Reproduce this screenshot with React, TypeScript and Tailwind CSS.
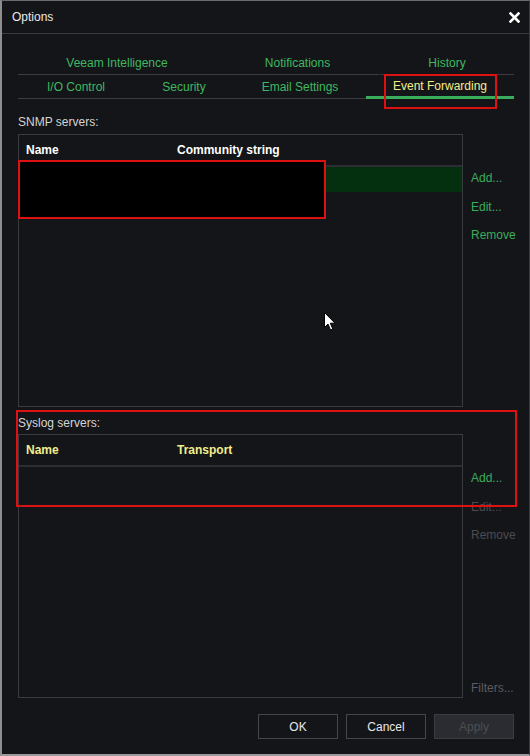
import React from "react";

const font = { fontFamily: '"Liberation Sans", Arial, sans-serif' };

function Tab({ label, w, active, gapLeft }: { label: string; w: number; active?: boolean; gapLeft?: boolean }) {
  return (
    <div
      className={
        "flex items-center justify-center h-[24px] shrink-0 " +
        (active ? "border-b-[3px] border-[#3aad5c] text-[#f2ee8c]" : "border-b border-[#3c3d42] text-[#3fb860]") +
        (gapLeft ? " ml-[1px]" : "")
      }
      style={{ width: w }}
    >
      {label}
    </div>
  );
}

function SideLinks({ enabled, filters }: { enabled: boolean; filters?: boolean }) {
  return (
    <div className="flex flex-col pl-[8px] pt-[37px] leading-[15px] flex-1 min-w-0 whitespace-nowrap">
      <div className="text-[#3aad5c]">Add...</div>
      <div className={"mt-[14px] " + (enabled ? "text-[#3aad5c]" : "text-[#4a4c51]")}>Edit...</div>
      <div className={"mt-[13px] " + (enabled ? "text-[#3aad5c]" : "text-[#4a4c51]")}>Remove</div>
      {filters && <div className="mt-auto mb-[2px] text-[#5a5c61]">Filters...</div>}
    </div>
  );
}

export default function App() {
  return (
    <div
      className="relative w-[530px] h-[756px] bg-[#141519] border-l-2 border-l-[#8e8e8e] border-t border-t-[#6a6a6a] border-b-2 border-b-[#9a9a9a] border-r border-r-[#3a3b3f] flex flex-col text-[12px] overflow-hidden"
      style={font}
    >
      {/* title bar */}
      <div className="h-[33px] border-b border-[#3a3b40] flex items-center justify-between pl-[10px] pr-[9px] shrink-0">
        <span className="text-[#e8e8e8] text-[12px] leading-[15px]">Options</span>
        <svg width="11" height="11" viewBox="0 0 11 11">
          <path d="M1.5 1.5 L9.5 9.5 M9.5 1.5 L1.5 9.5" stroke="#ffffff" strokeWidth="2.6" strokeLinecap="square" />
        </svg>
      </div>

      <div className="flex flex-col pl-[16px] pr-[15px]">
        {/* tabs */}
        <div className="mt-[17px] flex">
          <Tab label="Veeam Intelligence" w={198} />
          <Tab label="Notifications" w={163} />
          <Tab label="History" w={134} gapLeft />
        </div>
        <div className="flex">
          <Tab label="I/O Control" w={116} />
          <Tab label="Security" w={100} />
          <Tab label="Email Settings" w={132} />
          <Tab label="Event Forwarding" w={148} active />
        </div>

        {/* SNMP */}
        <div className="mt-[16px] leading-[15px] text-[#d4d4d4]">SNMP servers:</div>
        <div className="mt-[4px] flex">
          <div className="relative shrink-0 w-[445px] h-[273px] border border-[#3a3b40]">
            <div className="h-[32px] border-b-2 border-[#2c2d32] flex items-center pl-[7px] font-bold text-white">
              <div className="w-[151px]">Name</div>
              <div>Community string</div>
            </div>
            <div className="h-[25px] bg-[#05300f]" />
            <div className="absolute left-[-1px] top-[25px] w-[308px] h-[59px] bg-black border-2 border-[#dd1111]" />
          </div>
          <SideLinks enabled />
        </div>

        {/* Syslog */}
        <div className="mt-[9px] leading-[15px] text-[#d4d4d4]">Syslog servers:</div>
        <div className="mt-[3px] flex">
          <div className="relative shrink-0 w-[445px] h-[264px] border border-[#3a3b40]">
            <div className="h-[32px] border-b-2 border-[#2c2d32] flex items-center pl-[7px] font-bold text-[#f2ee8c]">
              <div className="w-[151px]">Name</div>
              <div>Transport</div>
            </div>
          </div>
          <SideLinks enabled={false} filters />
        </div>

        {/* buttons */}
        <div className="mt-[16px] flex justify-end gap-[8px]">
          <div className="w-[80px] h-[25px] border border-[#45464b] flex items-center justify-center text-[#e8e8e8]">OK</div>
          <div className="w-[80px] h-[25px] border border-[#45464b] flex items-center justify-center text-[#e8e8e8]">Cancel</div>
          <div className="w-[80px] h-[25px] border border-[#3a3c41] bg-[#2a2c31] flex items-center justify-center text-[#4c4e53]">Apply</div>
        </div>
      </div>

      {/* overlays: red annotation boxes */}
      <div className="absolute left-[382px] top-[73px] w-[113px] h-[35px] border-2 border-[#dd1111]" />
      <div className="absolute left-[14px] top-[409px] w-[501px] h-[97px] border-2 border-[#dd1111]" />

      {/* mouse cursor */}
      <svg className="absolute left-[322px] top-[311px]" width="13" height="20" viewBox="0 0 13 20">
        <path d="M0.5 0.5 L0.5 15.5 L4 12 L6.5 18 L8.8 17 L6.3 11.2 L11 11.2 Z" fill="#ffffff" stroke="#000000" strokeWidth="1" />
      </svg>
    </div>
  );
}
